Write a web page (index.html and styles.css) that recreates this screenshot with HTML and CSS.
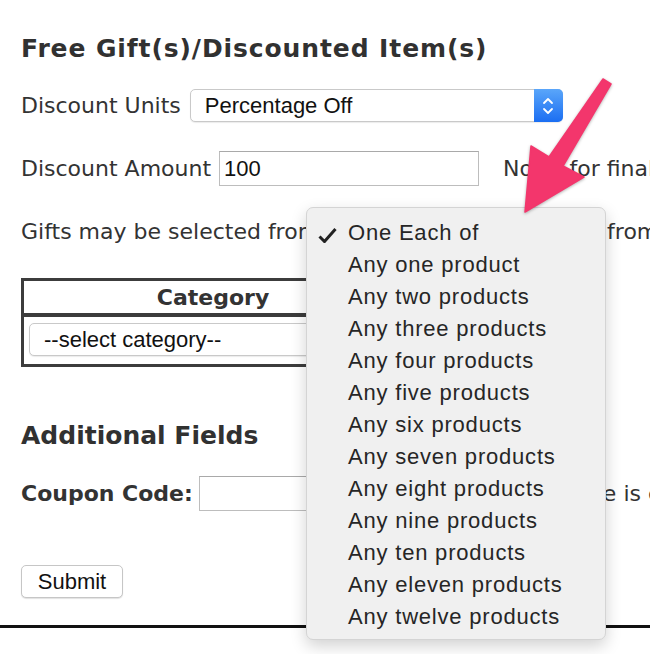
FILE: index.html
```html
<!DOCTYPE html>
<html>
<head>
<meta charset="utf-8">
<link rel="stylesheet" href="styles.css">
</head>
<body>
<div class="page">
  <h2 class="title title-main">Free Gift(s)/Discounted Item(s)</h2>

  <div class="row row-units">
    <span class="label">Discount Units</span>
    <div class="select select-units">
      <span class="select-text">Percentage Off</span>
      <span class="select-btn">
        <svg width="12" height="20" viewBox="0 0 12 20"><path d="M2 7 L6 3 L10 7 M2 13 L6 17 L10 13" fill="none" stroke="#fff" stroke-width="1.8" stroke-linecap="round" stroke-linejoin="round"/></svg>
      </span>
    </div>
  </div>

  <div class="row row-amount">
    <span class="label">Discount Amount</span>
    <div class="input input-amount">100</div>
    <span class="note note-amount">Note: for final price use 100</span>
  </div>

  <div class="row row-gifts">
    <span class="label">Gifts may be selected from</span>
    <div class="select select-each"><span class="select-text">One Each of</span></div>
    <span class="label">from the following</span>
  </div>

  <table class="cat">
    <tr><th>Category</th></tr>
    <tr><td><div class="select select-cat"><span class="select-text">--select category--</span></div></td></tr>
  </table>

  <h2 class="title title-extra">Additional Fields</h2>

  <div class="row row-coupon">
    <span class="label label-bold">Coupon Code:</span>
    <div class="input input-coupon"></div>
    <span class="note note-coupon">Note: code is case sensitive</span>
  </div>

  <div class="row row-submit">
    <div class="button">Submit</div>
  </div>

  <div class="rule"></div>

  <div class="menu">
    <div class="menu-item checked">
      <svg class="check" width="19" height="15" viewBox="0 0 19 15"><path d="M1.5 8.5 L6.5 13.5 L17.5 1" fill="none" stroke="#222" stroke-width="3"/></svg>
      One Each of
    </div>
    <div class="menu-item">Any one product</div>
    <div class="menu-item">Any two products</div>
    <div class="menu-item">Any three products</div>
    <div class="menu-item">Any four products</div>
    <div class="menu-item">Any five products</div>
    <div class="menu-item">Any six products</div>
    <div class="menu-item">Any seven products</div>
    <div class="menu-item">Any eight products</div>
    <div class="menu-item">Any nine products</div>
    <div class="menu-item">Any ten products</div>
    <div class="menu-item">Any eleven products</div>
    <div class="menu-item">Any twelve products</div>
  </div>

  <svg class="arrow" width="650" height="654" viewBox="0 0 650 654">
    <polygon points="603,79 611,84 563,166 584,177 525,212 531,146 549,157" fill="#f3366c" stroke="#f3366c" stroke-width="1.5" stroke-linejoin="round"/>
  </svg>
</div>
</body>
</html>
```

FILE: styles.css
```css
html, body {
  margin: 0;
  padding: 0;
  background: #ffffff;
}

body {
  font-family: "DejaVu Sans", Verdana, sans-serif;
  color: #333333;
}

.page {
  position: relative;
  width: 650px;
  height: 654px;
  padding: 0 21px;
  box-sizing: border-box;
  overflow: hidden;
}

.title {
  margin: 0;
  font-size: 25px;
  line-height: 32px;
  font-weight: bold;
  color: #313131;
  white-space: nowrap;
}

.title-main {
  padding-top: 33px;
  letter-spacing: 0.9px;
}

.title-extra {
  margin-top: 53px;
}

.row {
  display: flex;
  align-items: center;
  white-space: nowrap;
}

.label {
  font-size: 22px;
  line-height: 32px;
  flex: none;
}

.label-bold {
  font-weight: bold;
}

.note {
  font-size: 22px;
  line-height: 32px;
  flex: none;
}

.note-amount {
  margin-left: 16px;
}

.note-coupon {
  margin-left: 12px;
}

.row-units {
  margin-top: 24px;
  height: 33px;
  gap: 9px;
}

.row-amount {
  margin-top: 29px;
  height: 35px;
  gap: 8px;
}

.row-gifts {
  margin-top: 30px;
  height: 32px;
  gap: 8px;
}

.row-coupon {
  margin-top: 24px;
  height: 35px;
  gap: 6px;
}

.row-submit {
  margin-top: 54px;
}

.select {
  position: relative;
  box-sizing: border-box;
  height: 33px;
  background: #fff;
  border: 1px solid #c9c9c9;
  border-radius: 5px;
  box-shadow: 0 1px 1px rgba(0, 0, 0, 0.08);
  display: flex;
  align-items: center;
  flex: none;
}

.select-text {
  font-family: "Liberation Sans", Arial, sans-serif;
  font-size: 22px;
  color: #111;
  padding-left: 14px;
}

.select-units {
  width: 373px;
}

.select-btn {
  position: absolute;
  right: -1px;
  top: -1px;
  bottom: -1px;
  width: 29px;
  border-radius: 0 5px 5px 0;
  background: linear-gradient(#5aa6fa, #1b6ef2);
  display: flex;
  align-items: center;
  justify-content: center;
}

.select-each {
  width: 272px;
}

.select-cat {
  width: 368px;
}

.input {
  box-sizing: border-box;
  height: 35px;
  border: 1px solid #bdbdbd;
  border-top-color: #a9a9a9;
  background: #fff;
  font-family: "Liberation Sans", Arial, sans-serif;
  font-size: 22px;
  line-height: 33px;
  color: #111;
  padding-left: 4px;
  flex: none;
}

.input-amount {
  width: 260px;
}

.input-coupon {
  width: 280px;
}

.cat {
  margin-top: 30px;
  width: 384px;
  border-collapse: separate;
  border-spacing: 0;
  border: 3px solid #3c3c3c;
}

.cat th {
  height: 32px;
  padding: 0;
  font-size: 22px;
  font-weight: bold;
  text-align: center;
  border-bottom: 4px solid #3c3c3c;
  color: #333;
}

.cat td {
  padding: 6px 5px 8px 5px;
}

.button {
  box-sizing: border-box;
  width: 102px;
  height: 33px;
  border: 1px solid #c6c6c6;
  border-radius: 5px;
  background: #fff;
  box-shadow: 0 1px 1px rgba(0, 0, 0, 0.12);
  font-family: "Liberation Sans", Arial, sans-serif;
  font-size: 22px;
  line-height: 31px;
  text-align: center;
  color: #111;
}

.rule {
  margin: 27px -21px 0;
  height: 3px;
  background: #111;
}

.menu {
  position: absolute;
  left: 306px;
  top: 207px;
  width: 300px;
  height: 433px;
  box-sizing: border-box;
  padding: 9px 0 7px;
  background: #f0f0f0;
  border: 1px solid #d4d4d4;
  border-radius: 7px;
  box-shadow: 0 6px 16px rgba(0, 0, 0, 0.18);
}

.menu-item {
  position: relative;
  height: 32px;
  line-height: 32px;
  padding-left: 41px;
  font-family: "Liberation Sans", Arial, sans-serif;
  font-size: 22px;
  letter-spacing: 0.8px;
  color: #262626;
  white-space: nowrap;
}

.check {
  position: absolute;
  left: 11px;
  top: 11px;
}

.arrow {
  position: absolute;
  left: 0;
  top: 0;
  pointer-events: none;
  filter: drop-shadow(0 1px 1.5px rgba(0, 0, 0, 0.3));
}
```
